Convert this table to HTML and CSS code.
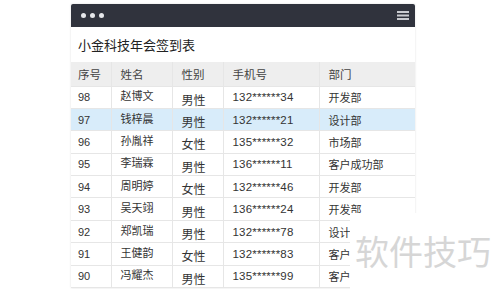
FILE: index.html
```html
<!DOCTYPE html>
<html lang="zh">
<head>
<meta charset="utf-8">
<link rel="stylesheet" href="styles.css">
</head>
<body>
<div class="page">
  <div class="window">
    <div class="titlebar">
      <div class="dots"><span></span><span></span><span></span></div>
      <svg class="menu" width="12" height="9" viewBox="0 0 12 9"><rect x="0" y="0" width="12" height="2" fill="#c9cbd0"/><rect x="0" y="3.5" width="12" height="2" fill="#c9cbd0"/><rect x="0" y="7" width="12" height="2" fill="#c9cbd0"/></svg>
    </div>
    <div class="heading">小金科技年会签到表</div>
    <table class="sheet">
      <colgroup>
        <col class="c-no"><col class="c-name"><col class="c-sex"><col class="c-tel"><col class="c-dep">
      </colgroup>
      <thead>
        <tr><th>序号</th><th>姓名</th><th>性别</th><th>手机号</th><th>部门</th></tr>
      </thead>
      <tbody>
        <tr><td>98</td><td class="name">赵博文</td><td class="sex">男性</td><td class="tel">132******34</td><td>开发部</td></tr>
        <tr class="sel"><td>97</td><td class="name">钱梓晨</td><td class="sex">男性</td><td class="tel">132******21</td><td>设计部</td></tr>
        <tr><td>96</td><td class="name">孙胤祥</td><td class="sex">女性</td><td class="tel">135******32</td><td>市场部</td></tr>
        <tr><td>95</td><td class="name">李瑞霖</td><td class="sex">男性</td><td class="tel">136******11</td><td>客户成功部</td></tr>
        <tr><td>94</td><td class="name">周明婷</td><td class="sex">女性</td><td class="tel">132******46</td><td>开发部</td></tr>
        <tr><td>93</td><td class="name">吴天翊</td><td class="sex">男性</td><td class="tel">136******24</td><td>开发部</td></tr>
        <tr><td>92</td><td class="name">郑凯瑞</td><td class="sex">男性</td><td class="tel">132******78</td><td>设计部</td></tr>
        <tr><td>91</td><td class="name">王健韵</td><td class="sex">女性</td><td class="tel">132******83</td><td>客户成功部</td></tr>
        <tr><td>90</td><td class="name">冯耀杰</td><td class="sex">男性</td><td class="tel">135******99</td><td>客户成功部</td></tr>
      </tbody>
    </table>
  </div>
  <div class="watermark">软件技巧</div>
</div>
</body>
</html>
```

FILE: styles.css
```css
html, body {
  margin: 0;
  padding: 0;
  background: #ffffff;
}
body {
  font-family: "Liberation Sans", "Noto Sans CJK SC", sans-serif;
  color: #333333;
  width: 500px;
  height: 289px;
  overflow: hidden;
}
.page {
  position: relative;
  width: 500px;
  height: 289px;
  padding: 4px 0 0 71px;
  box-sizing: border-box;
}
.window {
  width: 344px;
  background: #fff;
  box-shadow: 0 0 2px rgba(0, 0, 0, 0.12);
}
.titlebar {
  height: 23px;
  background: #30333d;
  display: flex;
  align-items: center;
  justify-content: space-between;
  padding: 0 6px 0 10px;
  border-radius: 2px 2px 0 0;
}
.dots {
  display: flex;
  gap: 4px;
}
.dots span {
  width: 5px;
  height: 5px;
  border-radius: 50%;
  background: #e6e7ea;
}
.menu {
  display: block;
}
.heading {
  height: 35px;
  line-height: 35px;
  padding-left: 7px;
  font-size: 13px;
  color: #222;
  font-family: "Noto Sans CJK SC", sans-serif;
}
.sheet {
  width: 344px;
  border-collapse: collapse;
  table-layout: fixed;
  font-size: 11px;
}
.sheet col.c-no { width: 40px; }
.sheet col.c-name { width: 61px; }
.sheet col.c-sex { width: 51px; }
.sheet col.c-tel { width: 96px; }
.sheet col.c-dep { width: 96px; }
.sheet th, .sheet td {
  text-align: left;
  font-weight: normal;
  padding: 0 0 0 9px;
  border-bottom: 1px solid #e6e6e6;
  border-left: 1px solid #e6e6e6;
  white-space: nowrap;
  overflow: hidden;
}
.sheet th:first-child, .sheet td:first-child {
  border-left: none;
  padding-left: 7px;
}
.sheet thead tr {
  height: 24px;
  background: #eeeeee;
}
.sheet th {
  font-size: 11.5px;
  color: #444;
}
.sheet tbody tr {
  height: 22.4px;
}
.sheet tr.sel {
  background: #d8ecfa;
}
.sheet td.name {
  padding-bottom: 4px;
}
.sheet td.sex {
  padding-top: 4px;
  font-size: 12px;
}
.sheet td.tel {
  font-size: 11.5px;
  letter-spacing: 0.2px;
}
.watermark {
  position: absolute;
  left: 350px;
  top: 213px;
  width: 150px;
  height: 76px;
  background: #ffffff;
  font-family: "Noto Sans CJK SC", sans-serif;
  font-size: 34px;
  color: #d6d6d6;
  display: flex;
  align-items: center;
  padding-left: 5px;
  padding-bottom: 2px;
  box-sizing: border-box;
}
```
